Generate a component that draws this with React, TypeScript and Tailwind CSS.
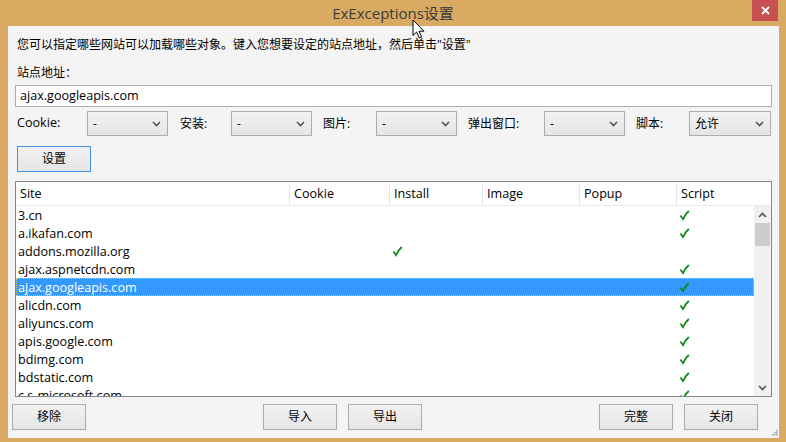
import React from "react";

type Row = { site: string; install?: boolean; script?: boolean; selected?: boolean };

const rows: Row[] = [
  { site: "3.cn", script: true },
  { site: "a.ikafan.com", script: true },
  { site: "addons.mozilla.org", install: true },
  { site: "ajax.aspnetcdn.com", script: true },
  { site: "ajax.googleapis.com", script: true, selected: true },
  { site: "alicdn.com", script: true },
  { site: "aliyuncs.com", script: true },
  { site: "apis.google.com", script: true },
  { site: "bdimg.com", script: true },
  { site: "bdstatic.com", script: true },
  { site: "c.s-microsoft.com", script: true },
];

function Check() {
  return (
    <svg width="11" height="11" viewBox="0 0 11 11" className="block">
      <path d="M1.5 5.5 L4 9.2 C5.5 5.5 7.5 3 9.8 1" fill="none" stroke="#0e8a12" strokeWidth="1.7" />
    </svg>
  );
}

function Chevron({ up = false }: { up?: boolean }) {
  return (
    <svg width="9" height="6" viewBox="0 0 9 6" className="block">
      <path
        d={up ? "M1 5 L4.5 1.5 L8 5" : "M1 1 L4.5 4.5 L8 1"}
        fill="none"
        stroke="#555"
        strokeWidth="1.6"
      />
    </svg>
  );
}

function Combo({ value, w = "w-[81px]" }: { value: string; w?: string }) {
  return (
    <div
      className={`${w} h-[25px] border border-[#acacac] bg-gradient-to-b from-[#f2f2f2] to-[#e5e5e5] flex items-center justify-between pl-[5px] pr-[6px]`}
    >
      <span>{value}</span>
      <Chevron />
    </div>
  );
}

function Button({ label, primary = false }: { label: string; primary?: boolean }) {
  return (
    <div
      className={`w-[74px] h-[26px] border ${
        primary ? "border-[#3c93e8]" : "border-[#acacac]"
      } bg-gradient-to-b from-[#f2f2f2] to-[#e5e5e5] flex items-center justify-center`}
    >
      {label}
    </div>
  );
}

export default function App() {
  return (
    <div className="w-[786px] h-[442px] bg-[#d9aa62] flex flex-col relative overflow-hidden text-[12px] text-black font-['Open_Sans','Noto_Sans_CJK_SC',sans-serif]">
      {/* title bar */}
      <div className="h-[26px] shrink-0 relative">
        <div className="text-center text-[15px] leading-[26px] text-[#3b3b3b]">ExExceptions设置</div>
        <div className="absolute right-[8px] top-0 w-[26px] h-[21px] bg-[#c75050] flex items-center justify-center">
          <svg width="9" height="9" viewBox="0 0 9 9">
            <path d="M1 1 L8 8 M8 1 L1 8" stroke="#fff" strokeWidth="1.8" />
          </svg>
        </div>
      </div>

      {/* client area */}
      <div className="flex-1 ml-[8px] mr-[7px] mb-[4px] bg-[#f4f4f4] flex flex-col relative">
        <div className="ml-[9px] mt-[11px] leading-[16px]">
          您可以指定哪些网站可以加载哪些对象。键入您想要设定的站点地址，然后单击"设置"
        </div>
        <div className="ml-[9px] mt-[12px] leading-[16px]">站点地址：</div>
        <div className="ml-[7px] mt-[4px] w-[757px] h-[22px] border border-[#abadb3] bg-white flex items-center pl-[4px] text-[12.6px]">
          ajax.googleapis.com
        </div>

        <div className="ml-[9px] mt-[4px] flex items-center">
          <span className="w-[70px] text-[12.6px]">Cookie:</span>
          <Combo value="-" />
          <span className="ml-[12px] w-[51px]">安装:</span>
          <Combo value="-" />
          <span className="ml-[11px] w-[53px]">图片:</span>
          <Combo value="-" />
          <span className="ml-[11px] w-[76px]">弹出窗口:</span>
          <Combo value="-" />
          <span className="ml-[11px] w-[53px]">脚本:</span>
          <Combo value="允许" w="w-[82px]" />
        </div>

        <div className="ml-[9px] mt-[10px]">
          <Button label="设置" primary />
        </div>

        {/* list */}
        <div className="ml-[7px] mt-[9px] w-[757px] h-[216px] border border-[#828790] bg-white flex flex-col text-[12.6px]">
          <div className="h-[24px] shrink-0 flex border-b border-[#e8ebef] pt-[2px]">
            <div className="w-[274px] pl-[4px] border-r border-[#e3e8ee] flex items-center">Site</div>
            <div className="w-[100px] pl-[4px] border-r border-[#e3e8ee] flex items-center">Cookie</div>
            <div className="w-[93px] pl-[4px] border-r border-[#e3e8ee] flex items-center">Install</div>
            <div className="w-[97px] pl-[4px] border-r border-[#e3e8ee] flex items-center">Image</div>
            <div className="w-[97px] pl-[4px] border-r border-[#e3e8ee] flex items-center">Popup</div>
            <div className="flex-1 pl-[4px] flex items-center">Script</div>
          </div>
          <div className="flex-1 flex overflow-hidden">
            <div className="w-[738px] overflow-hidden">
              {rows.map((r) => (
                <div
                  key={r.site}
                  className={`h-[18px] flex items-center ${
                    r.selected
                      ? "bg-[#3399ff] text-white outline-1 outline-dotted outline-offset-[-1px] outline-[#e6c35c]"
                      : ""
                  }`}
                >
                  <div className="w-[274px] pl-[2px] leading-[18px] pt-[1px]">{r.site}</div>
                  <div className="w-[100px]" />
                  <div className="w-[93px] pl-[2px]">{r.install && <Check />}</div>
                  <div className="w-[97px]" />
                  <div className="w-[97px]" />
                  <div className="flex-1 pl-[2px]">{r.script && <Check />}</div>
                </div>
              ))}
            </div>
            <div className="w-[17px] bg-[#f0f0f0] flex flex-col">
              <div className="h-[17px] flex items-center justify-center">
                <Chevron up />
              </div>
              <div className="h-[23px] mx-[1px] bg-[#cdcdcd]" />
              <div className="flex-1" />
              <div className="h-[17px] flex items-center justify-center">
                <Chevron />
              </div>
            </div>
          </div>
        </div>

        {/* bottom buttons */}
        <div className="ml-[4px] mt-[7px] flex">
          <Button label="移除" />
          <div className="ml-[177px]">
            <Button label="导入" />
          </div>
          <div className="ml-[11px]">
            <Button label="导出" />
          </div>
          <div className="ml-[177px]">
            <Button label="完整" />
          </div>
          <div className="ml-[11px]">
            <Button label="关闭" />
          </div>
        </div>

        {/* resize grip */}
        <svg width="7" height="7" viewBox="0 0 7 7" className="absolute right-[1px] bottom-[2px]">
          <rect x="5" y="1" width="1.5" height="1.5" fill="#a0a0a0" />
          <rect x="3" y="3" width="1.5" height="1.5" fill="#a0a0a0" />
          <rect x="5" y="3" width="1.5" height="1.5" fill="#a0a0a0" />
          <rect x="1" y="5" width="1.5" height="1.5" fill="#a0a0a0" />
          <rect x="3" y="5" width="1.5" height="1.5" fill="#a0a0a0" />
          <rect x="5" y="5" width="1.5" height="1.5" fill="#a0a0a0" />
        </svg>
      </div>

      {/* mouse pointer */}
      <svg width="14" height="21" viewBox="0 0 14 21" className="absolute left-[412px] top-[19px]">
        <path
          d="M1 1 L1 16.5 L4.6 13 L7.3 19 L9.6 18 L7 12.2 L12 12.2 Z"
          fill="#fff"
          stroke="#000"
          strokeWidth="1"
          strokeLinejoin="round"
        />
      </svg>
    </div>
  );
}
